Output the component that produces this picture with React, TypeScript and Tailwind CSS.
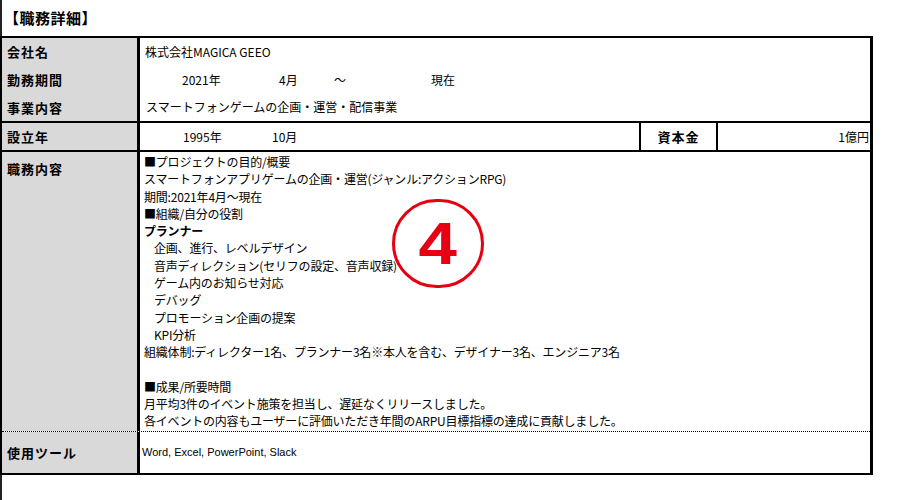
const jp = { fontFamily: '"Noto Sans CJK JP", "Noto Sans", sans-serif' }

const details = [
  { text: '■プロジェクトの目的/概要' },
  { text: 'スマートフォンアプリゲームの企画・運営(ジャンル:アクションRPG)' },
  { text: '期間:2021年4月～現在' },
  { text: '■組織/自分の役割' },
  { text: 'プランナー', strong: true },
  { text: '企画、進行、レベルデザイン', indent: true },
  { text: '音声ディレクション(セリフの設定、音声収録)', indent: true },
  { text: 'ゲーム内のお知らせ対応', indent: true },
  { text: 'デバッグ', indent: true },
  { text: 'プロモーション企画の提案', indent: true },
  { text: 'KPI分析', indent: true },
  { text: '組織体制:ディレクター1名、プランナー3名※本人を含む、デザイナー3名、エンジニア3名' },
  { text: '' },
  { text: '■成果/所要時間' },
  { text: '月平均3件のイベント施策を担当し、遅延なくリリースしました。' },
  { text: '各イベントの内容もユーザーに評価いただき年間のARPU目標指標の達成に貢献しました。' },
]

function Label({ children, className = '' }: { children: React.ReactNode; className?: string }) {
  return (
    <div className={`w-[138px] shrink-0 bg-[#d9d9d9] border-r-[3px] border-black pl-[5px] text-[13px] font-bold tracking-[1px] text-black ${className}`}>
      {children}
    </div>
  )
}

export default function App() {
  return (
    <div className="relative w-[909px] h-[500px] bg-white border-l-2 border-[#222] text-black" style={jp}>
      <div className="h-[36px] flex items-center pl-[2px] text-[15px] font-bold tracking-[0.5px]">【職務詳細】</div>

      <div className="w-[873px] -ml-[2px] border-t-2 border-r-[3px] border-b-2 border-l-2 border-black">
        {/* company rows */}
        <div className="flex h-[85px] border-b-2 border-black">
          <Label className="flex flex-col">
            <div className="h-[29px] flex items-center">会社名</div>
            <div className="h-[28px] flex items-center">勤務期間</div>
            <div className="h-[28px] flex items-center">事業内容</div>
          </Label>
          <div className="flex-1 flex flex-col text-[12px]">
            <div className="h-[29px] flex items-center pl-[5px]">株式会社MAGICA GEEO</div>
            <div className="h-[28px] flex items-center">
              <span className="ml-[42px] w-[97px]">2021年</span>
              <span className="w-[55px]">4月</span>
              <span className="w-[97px]">～</span>
              <span>現在</span>
            </div>
            <div className="h-[28px] flex items-center pl-[6px]">スマートフォンゲームの企画・運営・配信事業</div>
          </div>
        </div>

        {/* founded */}
        <div className="flex h-[29px] border-b-2 border-black">
          <Label className="flex items-center">設立年</Label>
          <div className="flex-1 flex items-center text-[12px]">
            <span className="ml-[43px] w-[89px]">1995年</span>
            <span>10月</span>
            <div className="ml-auto w-[79px] h-full border-l-2 border-r-2 border-black flex items-center justify-center text-[13px] font-bold tracking-[1px]">資本金</div>
            <div className="w-[152px] text-right pr-[1px]">1億円</div>
          </div>
        </div>

        {/* duties */}
        <div className="flex h-[280px] border-b border-dotted border-black">
          <Label className="pt-[7px]">職務内容</Label>
          <div className="flex-1 pt-[1px] pl-[4px] text-[12px] leading-[17.3px] tracking-[-0.2px]">
            {details.map((d, i) => (
              <div key={i} className={`h-[17.3px] ${d.indent ? 'pl-[10px]' : ''} ${d.strong ? 'font-bold' : ''}`}>
                {d.text}
              </div>
            ))}
          </div>
        </div>

        {/* tools */}
        <div className="flex h-[41px]">
          <Label className="flex items-center">使用ツール</Label>
          <div className="flex-1 flex items-center pl-[2px] text-[11px]" style={{ fontFamily: '"Liberation Sans", sans-serif' }}>
            Word, Excel, PowerPoint, Slack
          </div>
        </div>
      </div>

      {/* circled number overlay */}
      <div className="absolute left-[390px] top-[199px] w-[92px] h-[89px] rounded-full border-[3px] border-[#e60012] flex items-center justify-center">
        <span className="text-[60px] leading-none font-bold text-[#e60012] scale-x-[1.15]" style={{ fontFamily: '"Liberation Sans", sans-serif' }}>4</span>
      </div>
    </div>
  )
}
